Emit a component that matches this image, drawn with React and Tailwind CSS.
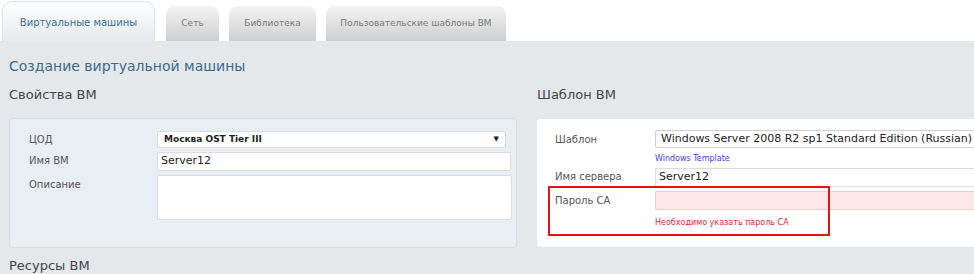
import React from "react";

const font = { fontFamily: "'DejaVu Sans', Verdana, sans-serif" };

const Tab = ({ label, active }) =>
  active ? (
    <div className="h-[40px] w-[153px] rounded-t-[10px] border border-b-0 border-[#dde5ec] bg-gradient-to-b from-white to-[#e6eaed] flex items-center justify-center pt-[2px] text-[10px] text-[#3b6f9c]">
      {label}
    </div>
  ) : (
    <div className="h-[35px] rounded-t-[8px] bg-gradient-to-b from-[#f4f4f4] to-[#cfcfcf] flex items-center justify-center text-[9px] text-[#7a7a7a]">
      {label}
    </div>
  );

const Field = ({ label, labelW, children, labelClass = "" }) => (
  <div className="flex">
    <div className={`shrink-0 text-[10px] text-[#555] ${labelClass}`} style={{ width: labelW }}>
      {label}
    </div>
    <div className="flex-1">{children}</div>
  </div>
);

export default function App() {
  return (
    <div className="w-[974px] h-[274px] overflow-hidden bg-white" style={font}>
      {/* Tabs */}
      <div className="flex items-end h-[41px] pl-[2px]">
        <Tab label="Виртуальные машины" active />
        <div className="w-[11px]" />
        <div className="w-[53px]">
          <Tab label="Сеть" />
        </div>
        <div className="w-[10px]" />
        <div className="w-[87px]">
          <Tab label="Библиотека" />
        </div>
        <div className="w-[10px]" />
        <div className="w-[180px]">
          <Tab label="Пользовательские шаблоны ВМ" />
        </div>
      </div>

      {/* Content */}
      <div className="bg-[#e4e8eb] h-[233px] pl-[9px] pt-[15px]">
        <div className="text-[14px] leading-[20px] text-[#3b6b8c]">Создание виртуальной машины</div>

        <div className="flex gap-[20px] mt-[9px]">
          {/* Left column */}
          <div className="w-[508px] shrink-0">
            <div className="text-[13px] leading-[20px] text-[#444]">Свойства ВМ</div>
            <div className="mt-[13px] h-[130px] rounded-[4px] border border-[#d6dde6] bg-[#e9eef4] pl-[19px] pr-[7px] pt-[12px] flex flex-col gap-[4px]">
              <Field label="ЦОД" labelW={128} labelClass="pt-[1px]">
                <div className="h-[17px] w-[349px] bg-white border border-[#dcdcdc] rounded-[2px] flex items-center justify-between px-[6px] text-[9px] font-bold text-[#222]">
                  <span>Москва OST Tier III</span>
                  <span className="text-[7px]">▼</span>
                </div>
              </Field>
              <Field label="Имя ВМ" labelW={128} labelClass="pt-[1px]">
                <div className="h-[19px] w-[354px] bg-white border border-[#dcdcdc] rounded-[2px] flex items-center px-[3px] text-[11px] text-[#222]">
                  Server12
                </div>
              </Field>
              <Field label="Описание" labelW={128} labelClass="pt-[2px]">
                <div className="h-[45px] w-[355px] bg-white border border-[#dcdcdc] rounded-[2px]" />
              </Field>
            </div>
            <div className="mt-[8px] text-[13px] leading-[20px] text-[#444]">Ресурсы ВМ</div>
          </div>

          {/* Right column */}
          <div className="w-[480px] shrink-0">
            <div className="text-[13px] leading-[20px] text-[#444]">Шаблон ВМ</div>
            <div className="relative mt-[14px] h-[128px] rounded-[4px] bg-white pl-[18px] pt-[11px]">
              <Field label="Шаблон" labelW={100} labelClass="pt-[2px]">
                <div className="h-[18px] bg-white border border-[#cfcfcf] rounded-[2px] flex items-center px-[5px] text-[11px] text-[#222] whitespace-nowrap">
                  Windows Server 2008 R2 sp1 Standard Edition (Russian)
                </div>
                <div className="mt-[5px] text-[8px] leading-[12px] text-[#3f3fd6]">Windows Template</div>
              </Field>
              <div className="h-[3px]" />
              <Field label="Имя сервера" labelW={100} labelClass="pt-[1px]">
                <div className="h-[19px] bg-white border border-[#dcdcdc] border-r-0 flex items-center px-[3px] text-[11px] text-[#222]">
                  Server12
                </div>
              </Field>
              <div className="h-[4px]" />
              <Field label="Пароль СА" labelW={100} labelClass="pt-[2px]">
                <div className="h-[19px] bg-[#fde8e8] border border-[#e6cfcf] border-r-0 rounded-l-[2px]" />
                <div className="mt-[8px] text-[8px] leading-[10px] text-[#e0283c]">Необходимо указать пароль СА</div>
              </Field>

              {/* annotation frame */}
              <div className="absolute left-[11px] top-[67px] w-[282px] h-[50px] border-2 border-[#e3121b]" />
            </div>
          </div>
        </div>
      </div>
    </div>
  );
}
